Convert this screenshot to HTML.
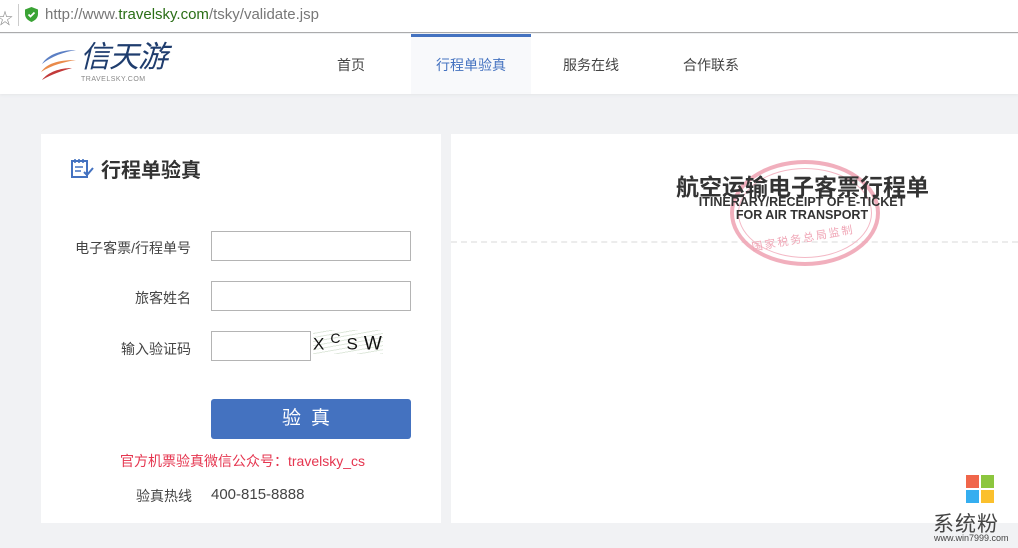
<!DOCTYPE html>
<html><head><meta charset="utf-8"><style>
*{margin:0;padding:0;box-sizing:border-box}
body{width:1018px;height:548px;overflow:hidden;background:#f1f2f4;font-family:"Liberation Sans","Noto Sans CJK SC",sans-serif;position:relative;color:#333}
.bar{position:absolute;left:0;top:0;width:1018px;height:33px;background:#fff;border-bottom:1px solid #a8a8a8}
.url{position:absolute;left:45px;top:6px;font-size:15px;color:#777}
.url b{font-weight:normal;color:#2a6e16}
.hdr{position:absolute;left:0;top:34px;width:1018px;height:60px;background:#fff;box-shadow:0 1px 3px #e4e5e8}
.nav{position:absolute;top:0;height:60px;line-height:62px;font-size:14px;color:#444;text-align:center}
.act{background:#f8f9fb;border-top:3px solid #4472c0;color:#4472c0;line-height:56px}
.card{position:absolute;background:#fff;top:134px;height:389px}
.lbl{position:absolute;font-size:14px;color:#444;text-align:right;width:150px;left:0}
.in{position:absolute;left:170px;width:200px;height:30px;border:1px solid #b4b4b4;background:#fff}
</style></head><body>
<div class="bar">
<span style="position:absolute;left:-3px;top:5px;font-size:16px;color:#888">☆</span>
<div style="position:absolute;left:18px;top:4px;width:1px;height:22px;background:#ccc"></div>
<svg style="position:absolute;left:25px;top:7px" width="13" height="15" viewBox="0 0 13 15"><path d="M6.5 0L13 2.5V7c0 4-3 6.5-6.5 8C3 13.5 0 11 0 7V2.5z" fill="#3aa335"/><path d="M3.5 7.5l2 2 4-4" stroke="#fff" stroke-width="1.8" fill="none"/></svg>
<div class="url">http://www.<b>travelsky.com</b>/tsky/validate.jsp</div>
</div>
<div class="hdr">
<svg style="position:absolute;left:40px;top:12px" width="40" height="36" viewBox="0 0 40 36"><path d="M2 18C8 8 22 4 36 4C24 6 12 10 2 18z" fill="#5b7fc4"/><path d="M1 26C8 16 22 14 36 14C24 16 12 19 1 26z" fill="#e98a4a"/><path d="M2 34C8 26 20 22 32 22C22 25 12 28 2 34z" fill="#c23a3a"/></svg>
<div style="position:absolute;left:80px;top:7px;font-size:30px;color:#1f3d6e;letter-spacing:-1px;line-height:34px;font-style:italic">信天游</div>
<div style="position:absolute;left:81px;top:42px;font-size:7px;color:#888;letter-spacing:.5px">TRAVELSKY.COM</div>
<div class="nav" style="left:320px;width:62px">首页</div>
<div class="nav act" style="left:411px;width:120px">行程单验真</div>
<div class="nav" style="left:555px;width:72px">服务在线</div>
<div class="nav" style="left:675px;width:72px">合作联系</div>
</div>
<div class="card" style="left:41px;width:400px">
<svg style="position:absolute;left:30px;top:25px" width="24" height="20" viewBox="0 0 24 20"><rect x="1" y="2" width="15" height="16" fill="none" stroke="#4472c0" stroke-width="2"/><path d="M4 0v4M8 0v4M12 0v4M4 8h8M4 12h6" stroke="#4472c0" stroke-width="1.6"/><path d="M13 13l3 3 6-7" stroke="#4472c0" stroke-width="2" fill="none"/></svg>
<div style="position:absolute;left:60px;top:20px;font-size:20px;font-weight:bold;color:#333">行程单验真</div>
<div class="lbl" style="top:104px">电子客票/行程单号</div>
<div class="in" style="top:97px"></div>
<div class="lbl" style="top:154px">旅客姓名</div>
<div class="in" style="top:147px"></div>
<div class="lbl" style="top:205px">输入验证码</div>
<div class="in" style="top:197px;width:100px"></div>
<div style="position:absolute;left:272px;top:196px;width:70px;height:24px;font-size:17px;color:#111;letter-spacing:6px;background:repeating-linear-gradient(170deg,#fff 0 3px,#dfe8dc 3px 4px)">X<sup style="font-size:14px">C</sup>S<span style="font-size:19px">W</span></div>
<div style="position:absolute;left:170px;top:265px;width:200px;height:40px;background:#4472c0;border-radius:3px;color:#fff;font-size:19px;text-align:center;line-height:40px;letter-spacing:10px">验真</div>
<div style="position:absolute;left:79px;top:317px;font-size:14px;color:#e5354f">官方机票验真微信公众号：travelsky_cs</div>
<div style="position:absolute;left:95px;top:352px;font-size:14px;color:#444">验真热线</div>
<div style="position:absolute;left:170px;top:352px;font-size:15px;color:#444">400-815-8888</div>
</div>
<div class="card" style="left:451px;width:567px">
<div style="position:absolute;left:0;top:107px;width:567px;border-top:2px dashed #ececec"></div>
<div style="position:absolute;left:279px;top:26px;width:150px;height:106px;border:4px solid #f0a6b6;border-radius:50%;opacity:.9"></div>
<div style="position:absolute;left:287px;top:34px;width:134px;height:90px;border:1.5px solid #f3b8c5;border-radius:50%"></div>
<div style="position:absolute;left:300px;top:96px;font-size:11px;color:#f0a6b6;letter-spacing:2px;transform:rotate(-10deg)">国家税务总局监制</div>
<div style="position:absolute;left:225px;top:34px;font-size:23px;font-weight:bold;color:#333">航空运输电子客票行程单</div>
<div style="position:absolute;left:190px;top:62px;width:322px;text-align:center;font-size:12.5px;font-weight:bold;color:#333;line-height:13px">ITINERARY/RECEIPT OF E-TICKET<br>FOR AIR TRANSPORT</div>
</div>
<div style="position:absolute;left:966px;top:475px;width:13px;height:13px;background:#f0664a"></div>
<div style="position:absolute;left:981px;top:475px;width:13px;height:13px;background:#8cc63e"></div>
<div style="position:absolute;left:966px;top:490px;width:13px;height:13px;background:#35aef0"></div>
<div style="position:absolute;left:981px;top:490px;width:13px;height:13px;background:#fbc02d"></div>
<div style="position:absolute;left:933px;top:508px;font-size:21px;color:#444;letter-spacing:1px">系统粉</div>
<div style="position:absolute;left:934px;top:533px;font-size:9px;color:#444">www.win7999.com</div>
</body></html>
